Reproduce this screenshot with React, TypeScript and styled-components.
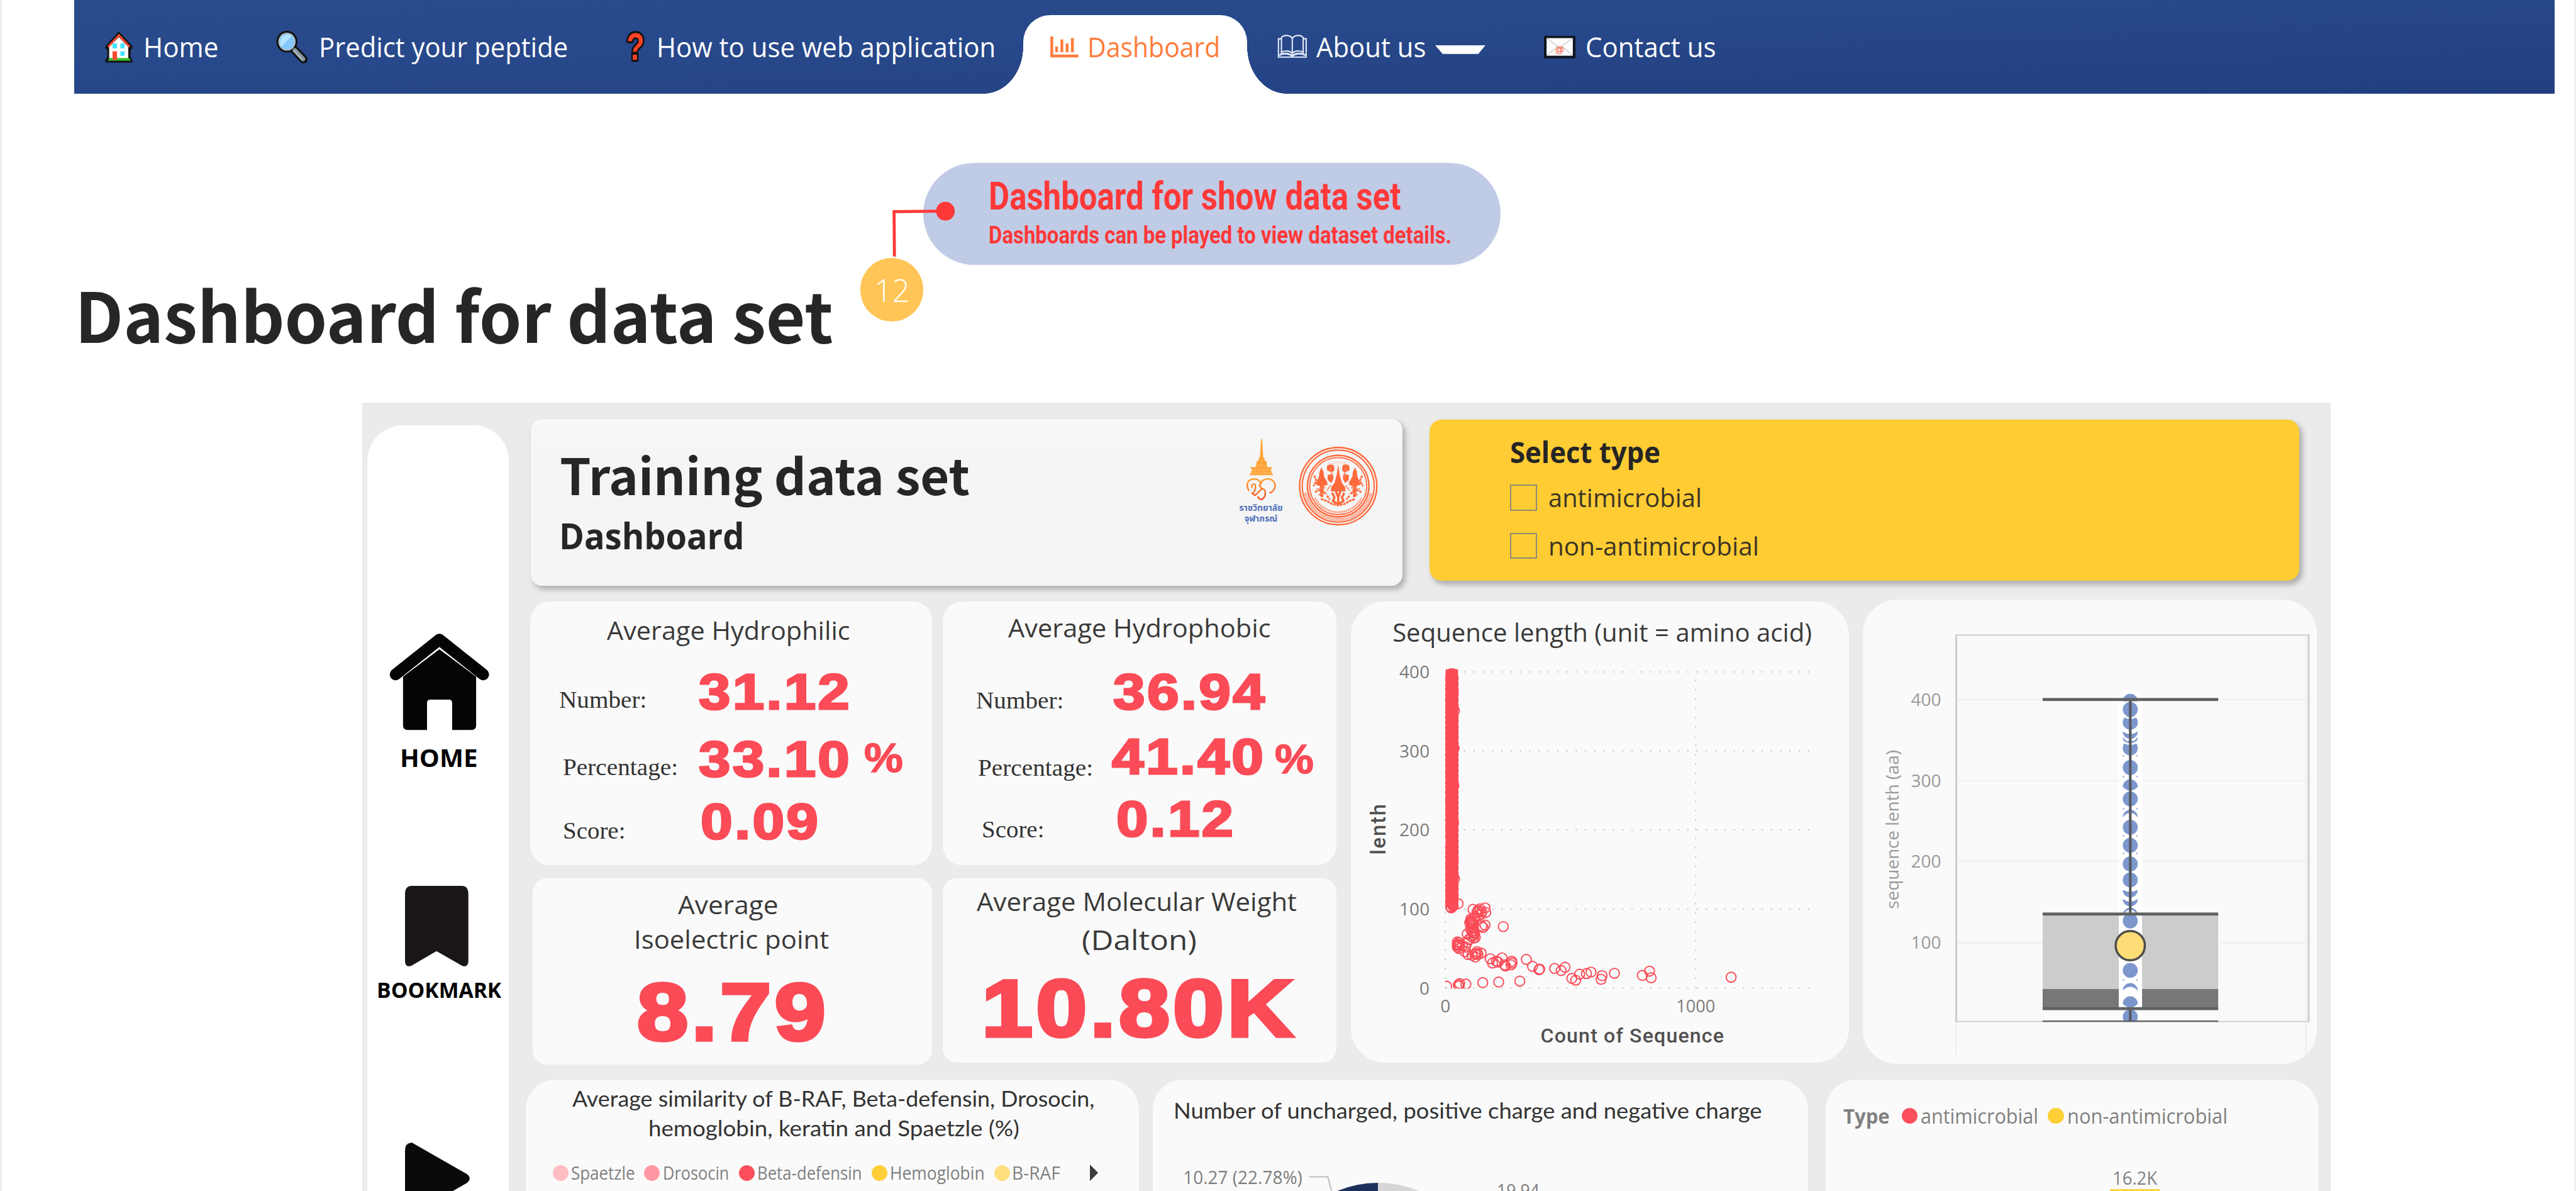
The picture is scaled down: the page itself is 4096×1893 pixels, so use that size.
import React, { useLayoutEffect, useRef, useState } from "react";
import styled, { createGlobalStyle, css } from "styled-components";

/* All sizes are given in design units (a 6873-unit wide board). */
const K = 4096 / 6873;
const u = (n: number) => `${(n * K).toFixed(2)}px`;

const SEGOE = `"Open Sans", "Noto Sans", sans-serif`;
const SOURCE = `"Noto Sans CJK SC", "Open Sans", sans-serif`;
const CALIBRI = `Lato, "Open Sans", sans-serif`;
const BLACK = `"Liberation Sans", Inter, sans-serif`;
const TIMES = `"Liberation Serif", serif`;
const ROBOTO = `Roboto, "Liberation Sans", sans-serif`;

const RED = "#fb4b57";
const YELLOW = "#ffcc33";
const CARD = "#fafafa";

const Global = createGlobalStyle`
  html, body { margin: 0; padding: 0; background: #fff; overflow: hidden; }
  * { box-sizing: border-box; }
`;

/* ---------- fitted text ---------- */

const FitBox = styled.span<{ $w: number }>`
  display: block;
  flex: none;
  width: ${(p) => u(p.$w)};
`;

const FitInner = styled.span<{ $size: number; $font: string; $weight: number; $color: string; $stroke: number }>`
  display: inline-block;
  vertical-align: top;
  white-space: nowrap;
  transform-origin: 0 50%;
  line-height: 1.2;
  font-family: ${(p) => p.$font};
  font-size: ${(p) => u(p.$size)};
  font-weight: ${(p) => p.$weight};
  color: ${(p) => p.$color};
  ${(p) =>
    p.$stroke > 0 &&
    css`
      -webkit-text-stroke: ${u(p.$stroke)} ${p.$color};
      letter-spacing: 0.035em;
    `}
`;

type FitProps = { w: number; size: number; font?: string; weight?: number; color?: string; stroke?: number; children: string };

function Fit({ w, size, font = SEGOE, weight = 400, color = "#333", stroke = 0, children }: FitProps) {
  const ref = useRef<HTMLSpanElement>(null);
  const [scale, setScale] = useState(1);
  useLayoutEffect(() => {
    if (ref.current) setScale((w * K) / ref.current.offsetWidth);
  }, [w, size, children]);
  return (
    <FitBox $w={w}>
      <FitInner ref={ref} $size={size} $font={font} $weight={weight} $color={color} $stroke={stroke} style={{ transform: `scaleX(${scale})` }}>
        {children}
      </FitInner>
    </FitBox>
  );
}

/* ---------- page ---------- */

const Page = styled.div`
  position: relative;
  width: 4096px;
  height: 1893px;
  overflow: hidden;
  background: #fff;
  box-shadow: inset ${u(5)} 0 0 #ececec, inset -${u(5)} 0 0 #f0f0f0;
`;

const NavBar = styled.nav`
  display: flex;
  align-items: flex-end;
  height: ${u(250)};
  margin-left: ${u(198)};
  width: ${u(6618)};
  background: linear-gradient(178deg, #2a4b8b 0%, #27488a 40%, #224080 100%);
`;

const NavItem = styled.a<{ $ml: number; $gap: number }>`
  display: flex;
  align-items: center;
  height: 100%;
  margin-left: ${(p) => u(p.$ml)};
  gap: ${(p) => u(p.$gap)};
`;

const ActiveTab = styled.a`
  position: relative;
  display: flex;
  align-items: center;
  gap: ${u(23)};
  height: ${u(210)};
  width: ${u(598)};
  margin-left: ${u(74)};
  padding: 0 0 ${u(40)} ${u(73)};
  background: #fff;
  border-radius: ${u(72)} ${u(72)} 0 0;
  &::before,
  &::after {
    content: "";
    position: absolute;
    bottom: 0;
    width: ${u(106)};
    height: ${u(126)};
  }
  &::before {
    right: calc(100% - 0.5px);
    background: radial-gradient(ellipse ${u(106)} ${u(126)} at 0 0, transparent 99.3%, #fff 100%);
  }
  &::after {
    left: calc(100% - 0.5px);
    background: radial-gradient(ellipse ${u(106)} ${u(126)} at 100% 0, transparent 99.3%, #fff 100%);
  }
`;

const Icon = styled.svg<{ $w: number; $h: number; $mt?: number }>`
  flex: none;
  display: block;
  width: ${(p) => u(p.$w)};
  height: ${(p) => u(p.$h)};
  margin-top: ${(p) => u(p.$mt ?? 0)};
  overflow: visible;
`;

/* ---------- callout (floats over the page) ---------- */

const Bubble = styled.aside`
  position: absolute;
  left: ${u(2464)};
  top: ${u(435)};
  width: ${u(1539)};
  height: ${u(271)};
  padding: ${u(30)} 0 0 ${u(173)};
  border-radius: ${u(136)};
  background: #c0cbe6;
`;

const Connector = styled.svg`
  position: absolute;
  left: ${u(2290)};
  top: ${u(530)};
  width: ${u(270)};
  height: ${u(160)};
`;

const StepBadge = styled.div`
  position: absolute;
  left: ${u(2295)};
  top: ${u(688)};
  width: ${u(169)};
  height: ${u(169)};
  display: flex;
  align-items: center;
  justify-content: center;
  border-radius: 50%;
  background: #ffc557;
`;

const PageTitle = styled.h1`
  margin: ${u(484)} 0 0 ${u(199)};
  height: ${u(200)};
  display: flex;
  align-items: center;
`;

/* ---------- dashboard ---------- */

const Board = styled.main`
  display: flex;
  align-items: flex-start;
  margin: ${u(140)} 0 0 ${u(966)};
  width: ${u(5252)};
  height: ${u(2103)};
  background: #ebebeb;
`;

const SideBar = styled.aside`
  flex: none;
  margin: ${u(60)} 0 0 ${u(13.5)};
  width: ${u(378)};
  height: ${u(2043)};
  padding-top: ${u(555)};
  border-radius: ${u(95)} ${u(95)} 0 0;
  background: #fff;
  overflow: hidden;
`;

const SideItem = styled.div<{ $x: number; $mt: number }>`
  margin: ${(p) => u(p.$mt)} 0 0 ${(p) => u(p.$x)};
`;

const Content = styled.section`
  flex: none;
  margin-left: ${u(45)};
  width: ${u(4800)};
`;

const Row = styled.div<{ $mt?: number; $ml?: number; $h?: number; $gap?: number }>`
  display: flex;
  align-items: flex-start;
  margin-top: ${(p) => u(p.$mt ?? 0)};
  padding-left: ${(p) => u(p.$ml ?? 0)};
  gap: ${(p) => u(p.$gap ?? 0)};
  ${(p) => p.$h && css`height: ${u(p.$h)};`}
`;

const Card = styled.article<{ $w: number; $h: number; $r: number; $mt?: number; $pt?: number; $ml?: number }>`
  flex: none;
  width: ${(p) => u(p.$w)};
  height: ${(p) => u(p.$h)};
  margin-top: ${(p) => u(p.$mt ?? 0)};
  margin-left: ${(p) => u(p.$ml ?? 0)};
  padding-top: ${(p) => u(p.$pt ?? 0)};
  border-radius: ${(p) => u(p.$r)};
  background: ${CARD};
`;

const SheetCard = styled(Card)`
  border-radius: ${(p) => `${u(p.$r)} ${u(p.$r)} 0 0`};
  overflow: hidden;
`;

const TitleCard = styled(Card)`
  display: flex;
  background: linear-gradient(180deg, #f8f8f8, #f5f5f5 22%, #f5f5f5);
  box-shadow: ${u(7)} ${u(10)} ${u(14)} rgba(0, 0, 0, 0.25);
`;

const TitleText = styled.div`
  flex: none;
  width: ${u(1865)};
  padding-left: ${u(76)};
`;

const SelectCard = styled(Card)`
  background: ${YELLOW};
  padding-left: ${u(216)};
  box-shadow: ${u(7)} ${u(10)} ${u(14)} rgba(0, 0, 0, 0.27);
`;

const Line = styled.div<{ $h: number; $x: number; $mt?: number }>`
  display: flex;
  align-items: center;
  height: ${(p) => u(p.$h)};
  margin-top: ${(p) => u(p.$mt ?? 0)};
  padding-left: ${(p) => u(p.$x)};
`;

const Check = styled.span`
  width: ${u(71)};
  height: ${u(70)};
  margin-right: ${u(31)};
  border: ${u(5)} solid #8f8b74;
`;

const Drop = styled.span<{ $dy: number; $ml?: number }>`
  margin-top: ${(p) => u(p.$dy * 2)};
  margin-left: ${(p) => u(p.$ml ?? 0)};
`;

const Dot = styled.i<{ $c: string; $ml: number; $mr: number }>`
  flex: none;
  width: ${u(42)};
  height: ${u(42)};
  border-radius: 50%;
  background: ${(p) => p.$c};
  margin: 0 ${(p) => u(p.$mr)} 0 ${(p) => u(p.$ml)};
`;

const Chart = styled.svg`
  display: block;
  width: 100%;
  height: 100%;
`;

/* ---------- nav icons ---------- */

const HouseIcon = () => (
  <Icon viewBox="0 0 74 83" $w={74} $h={83}>
    <path d="M37 4 L70 40 V44 L65 46 V72 L70 76 V80 H4 V76 L9 72 V46 L4 44 V40 Z" fill="#111" stroke="#111" strokeWidth="6" strokeLinejoin="round" />
    <path d="M37 15 L62 41 V72 H11 V41 Z" fill="#fdfdfd" />
    <path d="M8 41 L37 10 L66 41" fill="none" stroke="#ff4b2e" strokeWidth="5" />
    <path d="M7 78 L12 71 H64 L69 78 Z" fill="#35c22d" />
    <rect x="20" y="32" width="12" height="13" fill="#3fe3ff" />
    <rect x="41" y="32" width="11" height="13" fill="#3fe3ff" />
    <rect x="41" y="53" width="11" height="12" fill="#3fe3ff" />
    <rect x="20" y="53" width="12" height="23" fill="#ff4b2e" />
  </Icon>
);

const LensIcon = () => (
  <Icon viewBox="0 0 84 84" $w={84} $h={84}>
    <path d="M50 52 L73 76" stroke="#111" strokeWidth="22" strokeLinecap="round" />
    <ellipse cx="29" cy="29" rx="28" ry="29" fill="#111" />
    <path d="M50 52 L72 75" stroke="#84979d" strokeWidth="12" strokeLinecap="round" />
    <path d="M48 53 L69 76" stroke="#b6c3c6" strokeWidth="3" strokeLinecap="round" />
    <ellipse cx="29" cy="29" rx="23" ry="24" fill="#b5babd" />
    <ellipse cx="29" cy="29" rx="20" ry="21" fill="#84c8ff" />
    <path d="M14 43 A20 21 0 0 1 42 14 Z" fill="#b3e3ff" />
  </Icon>
);

const QuestionIcon = () => (
  <Icon viewBox="0 0 52 84" $w={52} $h={84}>
    <text x="26" y="77" textAnchor="middle" fontFamily="Liberation Sans, sans-serif" fontWeight="700" fontSize="102" textLength="48" lengthAdjust="spacingAndGlyphs" fill="#ff4326" stroke="#111" strokeWidth="11" strokeLinejoin="round" paintOrder="stroke">
      ?
    </text>
  </Icon>
);

const BarsIcon = () => (
  <Icon viewBox="0 0 75 56" $w={75} $h={56}>
    <path d="M4 0 V52 H75" fill="none" stroke="#ff7c3b" strokeWidth="7.5" />
    <path d="M17 42 V27 M31 42 V8 M45 42 V19 M59 42 V4" fill="none" stroke="#ff7c3b" strokeWidth="7.5" />
  </Icon>
);

const BookIcon = () => (
  <Icon viewBox="0 0 80 64" $w={80} $h={64}>
    <g fill="none" stroke="#dfe7f8" strokeWidth="3.6">
      <path d="M40 10 C34 0 16 0 11 8 V48 C18 42 34 42 40 50 C46 42 62 42 69 48 V8 C64 0 46 0 40 10 Z" />
      <path d="M40 10 V58" />
      <path d="M11 11 H3 V60 H77 V11 H69" />
      <path d="M5 55 C16 48 34 50 40 58 C46 50 64 48 75 55" strokeWidth="5" />
    </g>
  </Icon>
);

const CaretIcon = () => (
  <Icon viewBox="0 0 134 23" $w={134} $h={23} $mt={16}>
    <path d="M0 0 H134 L115 23 H20 Z" fill="#fff" />
  </Icon>
);

const MailIcon = () => (
  <Icon viewBox="0 0 84 60" $w={84} $h={60}>
    <rect x="0" y="0" width="84" height="60" rx="3" fill="#10151f" />
    <rect x="7" y="6" width="70" height="47" fill="#fdfdfd" />
    <path d="M8 7 L42 32 L76 7 M8 52 L36 28 M76 52 L48 28" fill="none" stroke="#cfcfcf" strokeWidth="2.5" />
    <text x="42" y="46" textAnchor="middle" fontFamily="Liberation Sans, sans-serif" fontWeight="700" fontSize="24" fill="#ff4b2e">
      @
    </text>
  </Icon>
);

function Navigation() {
  const label = (text: string, w: number) => (
    <Fit w={w} size={72} color="#fff">
      {text}
    </Fit>
  );
  return (
    <NavBar>
      <NavItem $ml={82} $gap={28}>
        <HouseIcon />
        {label("Home", 200)}
      </NavItem>
      <NavItem $ml={155} $gap={29}>
        <LensIcon />
        {label("Predict your peptide", 665)}
      </NavItem>
      <NavItem $ml={155} $gap={30}>
        <QuestionIcon />
        {label("How to use web application", 904)}
      </NavItem>
      <ActiveTab>
        <BarsIcon />
        <Fit w={354} size={72} color="#ff7c3b">
          Dashboard
        </Fit>
      </ActiveTab>
      <NavItem $ml={80} $gap={24}>
        <BookIcon />
        {label("About us", 293)}
        <CaretIcon />
      </NavItem>
      <NavItem $ml={157} $gap={26}>
        <MailIcon />
        {label("Contact us", 348)}
      </NavItem>
    </NavBar>
  );
}

function Callout() {
  return (
    <>
      <Bubble>
        <Line $h={120} $x={0}>
          <Fit w={1100} size={101} font={ROBOTO} weight={700} color="#ff3838">
            Dashboard for show data set
          </Fit>
        </Line>
        <Line $h={80} $x={0} $mt={4}>
          <Fit w={1235} size={64} font={ROBOTO} weight={700} color="#ff3838">
            Dashboards can be played to view dataset details.
          </Fit>
        </Line>
      </Bubble>
      <Connector viewBox="2290 530 270 160">
        <path d="M2386 684 L2385 564 L2510 563" fill="none" stroke="#ff3838" strokeWidth="8" />
        <circle cx="2522" cy="563" r="25" fill="#ff3838" />
      </Connector>
      <StepBadge>
        <Fit w={94} size={83} weight={300} color="#fff">
          12
        </Fit>
      </StepBadge>
    </>
  );
}

/* ---------- side bar ---------- */

function Side() {
  return (
    <SideBar>
      <SideItem $x={60.5} $mt={0}>
        <Icon viewBox="1040 1689 264 257" $w={264} $h={257}>
          <path d="M1055 1798 L1172 1705 L1289 1798" fill="none" stroke="#050505" strokeWidth="31" strokeLinecap="round" strokeLinejoin="round" />
          <path d="M1172 1731 L1270 1804 V1934 Q1270 1946 1258 1946 H1206 V1874 Q1206 1865 1197 1865 H1148 Q1139 1865 1139 1874 V1946 H1087 Q1075 1946 1075 1934 V1804 Z" fill="#050505" />
        </Icon>
      </SideItem>
      <SideItem $x={87} $mt={36}>
        <Fit w={208} size={66} font={SEGOE} weight={700} color="#000">
          HOME
        </Fit>
      </SideItem>
      <SideItem $x={101.5} $mt={302}>
        <Icon viewBox="0 0 169 216" $w={169} $h={216}>
          <path d="M18 0 H151 Q169 0 169 22 V202 Q167 219 152 213 L84 174 L17 213 Q2 219 0 202 V22 Q0 0 18 0 Z" fill="#1a1617" />
        </Icon>
      </SideItem>
      <SideItem $x={25} $mt={26}>
        <Fit w={332} size={58} font={SEGOE} weight={700} color="#000">
          BOOKMARK
        </Fit>
      </SideItem>
      <SideItem $x={101.5} $mt={372}>
        <Icon viewBox="0 0 174 192" $w={174} $h={192}>
          <path d="M18 0 L165 84 Q180 96 165 108 L18 192 Q0 190 0 172 V20 Q0 2 18 0 Z" fill="#0a0a0a" />
        </Icon>
      </SideItem>
    </SideBar>
  );
}

/* ---------- emblems ---------- */

const EmblemBox = styled.svg`
  flex: none;
  display: block;
  width: ${u(430)};
  height: ${u(270)};
  margin-top: ${u(33)};
`;

function Emblems() {
  const rays = Array.from({ length: 72 }, (_, i) => i * 5);
  return (
    <EmblemBox viewBox="0 0 430 270">
      <defs>
        <linearGradient id="royal" x1="0" y1="0" x2="0" y2="1">
          <stop offset="0" stopColor="#ffa436" />
          <stop offset="1" stopColor="#f4511e" />
        </linearGradient>
      </defs>
      <path d="M84 22 L87 22 L90 70 L93 72 L94 79 L99 82 L100 94 L104 97 L114 96 L110 103 L114 114 L118 118 H52 L56 114 L60 103 L55 96 L67 97 L71 94 L72 82 L77 79 L78 72 L81 70 Z" fill="#ffa53a" />
      <path d="M60 104 H110 M70 92 H101 M58 112 H113" stroke="#ffd39b" strokeWidth="1.6" strokeDasharray="4 3" />
      <path
        d="M51 158 C42 142 50 127 68 128 C76 129 82 134 84 142 M80 147 C84 127 105 122 117 134 C127 146 120 160 108 165 M60 150 C56 140 70 138 69 148 C70 158 64 166 61 166 L68 172 L84 157 L84 150 L80 147 M84 155 C98 150 98 172 90 180 C84 185 78 180 76 176"
        fill="none"
        stroke="url(#royal)"
        strokeWidth="4"
        strokeLinecap="round"
      />
      <g fontFamily='"Noto Sans Thai", "Noto Sans", sans-serif' fontWeight="700" fill="#4f70bb" textAnchor="middle">
        <text x="84" y="213" fontSize="24" textLength="116" lengthAdjust="spacingAndGlyphs">
          ราชวิทยาลัย
        </text>
        <text x="84" y="241" fontSize="24" textLength="88" lengthAdjust="spacingAndGlyphs">
          จุฬาภรณ์
        </text>
      </g>
      <g transform="translate(290 147)" fill="none" stroke="#ff6a3c">
        <circle r="103" strokeWidth="4" />
        <circle r="96" strokeWidth="3.5" />
        <circle r="82" strokeWidth="4" />
        <circle r="76" strokeWidth="3" />
        <path d="M-88 18 A90 90 0 0 0 88 18" strokeWidth="9" stroke="#ff9575" strokeDasharray="3 2" />
        <path d="M-62 32 A70 70 0 0 0 62 32" strokeWidth="5" stroke="#ff8e6c" strokeDasharray="4 2" />
        <g fill="#ff6a3c" stroke="none">
          <path d="M0 -58 L4 -30 L10 -8 L18 2 L20 14 H-20 L-18 2 L-10 -8 L-4 -30 Z" />
          <path d="M-45 -50 L-39 -38 L-38 -26 L-30 -12 L-28 -4 L-38 0 L-40 30 L-48 28 L-49 0 L-60 -4 L-56 -14 L-51 -26 L-50 -38 Z" />
          <path d="M45 -50 L39 -38 L38 -26 L30 -12 L28 -4 L38 0 L40 30 L48 28 L49 0 L60 -4 L56 -14 L51 -26 L50 -38 Z" />
          <path d="M-30 -54 L-22 -58 L-12 -56 L-10 -44 L-16 -36 L-30 -42 Z M30 -54 L22 -58 L12 -56 L10 -44 L16 -36 L30 -42 Z" />
          <path d="M-28 -30 L-14 -32 L-12 -22 L-18 -8 L-28 -16 Z M28 -30 L14 -32 L12 -22 L18 -8 L28 -16 Z" />
        </g>
        <path d="M-16 18 L-10 30 L-14 40 L0 48 L14 40 L10 30 L16 18 M-6 14 L0 30 L6 14 M0 30 V48" strokeWidth="6" />
        <path d="M-64 -28 L-58 -14 L-66 0 M64 -28 L58 -14 L66 0 M-62 16 L-48 10 L-30 22 M62 16 L48 10 L30 22 M-46 34 L-30 40 L-16 48 L0 51 L16 48 L30 40 L46 34 M-30 26 L-22 36 M30 26 L22 36" strokeWidth="5" strokeDasharray="7 2" />
        <path d="M-22 -48 L-14 -20 M22 -48 L14 -20 M-58 8 L-34 4 M58 8 L34 4 M-52 24 L-34 14 M52 24 L34 14 M-20 -2 L-30 12 M20 -2 L30 12" strokeWidth="4" stroke="#ff8761" strokeDasharray="5 2" />
        {rays.filter((a) => a > 240 && a < 300).map((a) => (
          <path key={a} d="M60 0 H66" transform={`rotate(${a})`} strokeWidth="1.5" stroke="#ffb59f" />
        ))}
      </g>
    </EmblemBox>
  );
}

/* ---------- metric cards ---------- */

type Metric = { label: string; lx: number; lw: number; dy: number; value: string; vx: number; vw: number; mt: number; pct?: [number, number] };

function MetricRow({ label, lx, lw, dy, value, vx, vw, mt, pct }: Metric) {
  return (
    <Line $h={100} $x={lx} $mt={mt}>
      <Drop $dy={dy}>
        <Fit w={lw} size={63} font={TIMES}>
          {label}
        </Fit>
      </Drop>
      <Drop $dy={0} $ml={vx - lx - lw}>
        <Fit w={vw} size={134} font={BLACK} weight={700} color={RED} stroke={5}>
          {value}
        </Fit>
      </Drop>
      {pct && (
        <Drop $dy={pct[1]} $ml={pct[0]}>
          <Fit w={107} size={108} font={BLACK} weight={700} color={RED} stroke={2.5}>
            %
          </Fit>
        </Drop>
      )}
    </Line>
  );
}

function Head({ x, w, mt, size = 66, children }: { x: number; w: number; mt?: number; size?: number; children: string }) {
  return (
    <Line $h={80} $x={x} $mt={mt}>
      <Fit w={w} size={size} color="#3a3a3a">
        {children}
      </Fit>
    </Line>
  );
}

function Metrics() {
  return (
    <div>
      <Row $gap={29.5}>
        <Card $w={1072} $h={702} $r={52} $pt={37}>
          <Head x={205} w={648}>Average Hydrophilic</Head>
          <MetricRow label="Number:" lx={78} lw={233} dy={22} value="31.12" vx={449} vw={408} mt={73} />
          <MetricRow label="Percentage:" lx={87} lw={307} dy={21} value="33.10" vx={449} vw={408} mt={81} pct={[34, -3]} />
          <MetricRow label="Score:" lx={88} lw={167} dy={25} value="0.09" vx={454} vw={320} mt={65} />
        </Card>
        <Card $w={1049} $h={702} $r={52} $pt={31}>
          <Head x={174} w={700}>Average Hydrophobic</Head>
          <MetricRow label="Number:" lx={89} lw={233} dy={22} value="36.94" vx={454} vw={410} mt={80} />
          <MetricRow label="Percentage:" lx={94} lw={307} dy={30} value="41.40" vx={451} vw={410} mt={72} pct={[24, 9]} />
          <MetricRow label="Score:" lx={103} lw={167} dy={27} value="0.12" vx={462} vw={318} mt={67} />
        </Card>
      </Row>
      <Row $gap={29.5} $mt={36} $ml={6}>
        <Card $w={1066} $h={497} $r={38} $pt={31}>
          <Head x={389} w={268}>Average</Head>
          <Head x={271} w={520} mt={12}>Isoelectric point</Head>
          <Line $h={160} $x={280} $mt={74}>
            <Fit w={511} size={215} font={BLACK} weight={700} color={RED} stroke={9}>
              8.79
            </Fit>
          </Line>
        </Card>
        <Card $w={1049} $h={491.5} $r={38} $pt={23}>
          <Head x={90} w={854}>Average Molecular Weight</Head>
          <Head x={371} w={307} mt={20} size={74}>(Dalton)</Head>
          <Line $h={160} $x={103} $mt={63}>
            <Fit w={840} size={215} font={BLACK} weight={700} color={RED} stroke={9}>
              10.80K
            </Fit>
          </Line>
        </Card>
      </Row>
    </div>
  );
}

/* ---------- scatter chart ---------- */

const sx = (x: number) => 3590 + x * 0.8673;
const sy = (y: number) => 1590 + y * 0.8036;

const cloud: [number, number][] = [
  [393, 1040], [415, 1038], [430, 1035], [405, 1050], [420, 1048], [432, 1050], [410, 1060], [400, 1065], [395, 1070], [385, 1078],
  [390, 1080], [383, 1085], [395, 1090], [388, 1095], [420, 1095], [424, 1100], [430, 1092], [385, 1105], [395, 1110], [390, 1115],
  [398, 1120], [375, 1122], [388, 1130], [395, 1135], [400, 1133], [380, 1140], [345, 1148], [350, 1150], [345, 1155], [352, 1160],
  [345, 1165], [360, 1160], [350, 1170], [370, 1165], [375, 1150], [368, 1180], [378, 1190], [405, 1180], [400, 1188], [408, 1190],
  [418, 1185], [400, 1198], [390, 1192], [446, 1204], [482, 1201], [453, 1218], [465, 1212], [470, 1215], [490, 1224], [493, 1228],
  [512, 1212], [513, 1218], [510, 1224], [486, 1097], [557, 1206], [576, 1229], [596, 1240], [598, 1238], [644, 1236], [664, 1243],
  [676, 1232], [697, 1269], [709, 1275], [721, 1255], [742, 1253], [756, 1248], [790, 1260], [787, 1272], [828, 1252], [914, 1259],
  [936, 1245], [941, 1267], [1187, 1265], [537, 1278], [472, 1281], [423, 1283], [371, 1288], [352, 1286], [348, 1290], [312, 1295],
  [350, 1294], [347, 1021], [386, 1072], [392, 1102], [408, 1043], [418, 1056], [345, 1160], [392, 1085], [388, 1088], [396, 1126],
  [387, 1082], [394, 1118], [412, 1047], [347, 1158], [404, 1186],
];

const column: [number, number][] = Array.from({ length: 390 }, (_, i) => [
  324 + ((i * 37) % 9) + ((i * 53) % 31 === 0 ? 4 : 0),
  257 + i * 2,
]);

function Scatter() {
  const ticks: [string, number][] = [["400", 252], ["300", 514], ["200", 776], ["100", 1039], ["0", 1301]];
  return (
    <Chart viewBox="3605 1604.5 1329 1229.5">
      <defs>
        <clipPath id="plot">
          <rect x={sx(307)} y={sy(240)} width="1100" height={sy(1303) - sy(240)} />
        </clipPath>
      </defs>
      <text x="3716" y="1712" fontFamily={SEGOE} fontSize="67" fill="#3a3a3a" textLength="1119" lengthAdjust="spacingAndGlyphs">
        Sequence length (unit = amino acid)
      </text>
      <g stroke="#d0d0d0" strokeWidth="4" strokeDasharray="4 20.8">
        {ticks.map(([t, y]) => (
          <path key={t} d={`M${sx(308)} ${sy(y)}H${sx(1452)}`} />
        ))}
        <path d={`M${sx(308)} ${sy(1301)}V${sy(252)}M${sx(1078)} ${sy(1301)}V${sy(252)}`} />
      </g>
      <g fontFamily={SEGOE} fontSize="47" fill="#7a7a7a" textAnchor="end">
        {ticks.map(([t, y]) => (
          <text key={t} x="3815" y={sy(y) + 17}>
            {t}
          </text>
        ))}
      </g>
      <g fontFamily={SEGOE} fontSize="47" fill="#7a7a7a" textAnchor="middle">
        <text x="3857" y="2700">0</text>
        <text x="4525" y="2700" textLength="104" lengthAdjust="spacingAndGlyphs">1000</text>
      </g>
      <g fontFamily={ROBOTO} fontWeight="500" fill="#505050">
        <text x="4111" y="2780" fontSize="54" textLength="489" lengthAdjust="spacing">
          Count of Sequence
        </text>
        <text transform="translate(3697 2280) rotate(-90)" fontSize="55" textLength="135" lengthAdjust="spacing">
          lenth
        </text>
      </g>
      <g clipPath="url(#plot)" fill="none" stroke={RED} strokeWidth="3.2">
        {[...column, ...cloud].map(([x, y], i) => (
          <circle key={i} cx={sx(x)} cy={sy(y)} r="13.2" />
        ))}
        <path d={`M${sx(328)} ${sy(243)}V${sy(1030)}`} strokeWidth="33" />
      </g>
    </Chart>
  );
}

/* ---------- box plot ---------- */

const bx = (x: number) => 4950 + x * 0.8291;
const by = (y: number) => 1590 + y * 0.8036;

const fullBeads = [377, 420, 505, 570, 674, 768, 828, 890, 943, 1079, 1243, 1397];
/* [centre, depth of the inner curve]: what shows of beads hidden by later ones */
const lowCrescents: [number, number][] = [[450, 14], [468, 28], [976, 10], [1006, 14]];
const highCrescents: [number, number][] = [[350, 0], [634, -20], [735, 24], [1060, 30], [1310, 20], [1354, -20]];

function BoxPlot() {
  const ticks: [string, number][] = [["400", 344], ["300", 613], ["200", 881], ["100", 1151]];
  const cx = bx(886);
  const r = 20;
  const left = bx(604);
  const width = bx(1169) - left;
  const fill = "#7d97cd";
  const bar = (y: number, h: number) => <rect x={left} y={by(y) - h / 2} width={width} height={h} fill="#5f6261" />;
  return (
    <Chart viewBox="4971 1600 1211 1238">
      <defs>
        <clipPath id="box-area">
          <rect x="5220" y="1600" width="941" height={by(1414) - 1600} />
        </clipPath>
      </defs>
      <g stroke="#f0f0f0" strokeWidth="4">
        {ticks.map(([t, y]) => (
          <path key={t} d={`M5222 ${by(y)}H6158`} />
        ))}
        <path d={`M${bx(326)} ${by(1413)}V${by(1525)}M${bx(1451)} ${by(130)}V${by(1525)}`} />
      </g>
      <path d={`M${bx(326)} ${by(130)}H${bx(1461)}M${bx(326)} ${by(1413)}H${bx(1461)}`} stroke="#c9c9c9" strokeWidth="3" fill="none" />
      <path d={`M${bx(326)} ${by(129)}V${by(1414)}M${bx(1460)} ${by(129)}V${by(1414)}`} stroke="#cdcdcd" strokeWidth="5" />
      <g fontFamily={SEGOE} fontSize="47" fill="#999" textAnchor="end">
        {ticks.map(([t, y]) => (
          <text key={t} x="5180" y={by(y) + 17}>
            {t}
          </text>
        ))}
      </g>
      <text transform="translate(5067 2425) rotate(-90)" fontFamily={SEGOE} fontSize="47" fill="#999" textLength="424" lengthAdjust="spacing">
        sequence lenth (aa)
      </text>
      <rect x={left} y={by(1055)} width={width} height={by(1305) - by(1055)} fill="#cbcccb" />
      <rect x={left} y={by(1305)} width={width} height={by(1370) - by(1305)} fill="#767776" />
      <rect x={bx(849)} y={by(312)} width={bx(924) - bx(849)} height={by(1413) - by(312)} rx="24" fill="#fff" />
      <g clipPath="url(#box-area)">
        {lowCrescents.map(([y, d]) => (
          <path key={y} d={`M${cx - r} ${by(y)}A${r} ${r} 0 0 0 ${cx + r} ${by(y)}Q${cx} ${by(y) + d} ${cx - r} ${by(y)}Z`} fill={fill} />
        ))}
        {highCrescents.map(([y, d]) => (
          <path key={y} d={`M${cx - r} ${by(y)}A${r} ${r} 0 0 1 ${cx + r} ${by(y)}Q${cx} ${by(y) - d} ${cx - r} ${by(y)}Z`} fill={fill} />
        ))}
        {fullBeads.map((y) => (
          <circle key={y} cx={cx} cy={by(y)} r={r} fill={fill} />
        ))}
        <path d={`M${cx - 24} ${by(392)}Q${cx} ${by(420)} ${cx + 24} ${by(392)}`} fill="none" stroke="#fff" strokeWidth="5" />
        <path d={`M${cx - 24} ${by(480)}Q${cx} ${by(504)} ${cx + 24} ${by(480)}`} fill="none" stroke="#fff" strokeWidth="5" />
        {[531, 600, 707, 797, 855, 1275].map((y) => (
          <path key={y} d={`M${cx - 20} ${by(y)}h4m32 0h4`} stroke={fill} strokeWidth="3" />
        ))}
        <path d={`M${cx} ${by(344)}V${by(1055)}M${cx} ${by(1370)}V${by(1413)}`} stroke="#55585c" strokeWidth="7" />
        {bar(344, 8)}
        {bar(1056, 8)}
        {bar(1370, 8)}
        {bar(1413, 6)}
      </g>
      <circle cx={cx} cy={by(1161)} r="39" fill="#ffdd76" stroke="#4d4f4e" strokeWidth="6" />
    </Chart>
  );
}

/* ---------- bottom cards ---------- */

const ArrowIcon = () => (
  <Icon viewBox="0 0 22 44" $w={22} $h={44}>
    <path d="M0 0 L22 22 L0 44 Z" fill="#3d3d3d" stroke="#fff" strokeWidth="8" paintOrder="stroke" />
  </Icon>
);

function Legend({ w, size = 50, weight, children }: { w: number; size?: number; weight?: number; children: string }) {
  return (
    <Fit w={w} size={size} weight={weight} color="#808080">
      {children}
    </Fit>
  );
}

const PieBox = styled.svg`
  display: block;
  width: 100%;
  height: ${u(85)};
  margin-top: ${u(95)};
`;

const BarTop = styled.div`
  width: ${u(132)};
  height: ${u(8)};
  margin: 0 0 0 ${u(758)};
  background: #fdd23c;
`;

function BottomCards() {
  return (
    <Row $mt={39} $gap={37}>
      <SheetCard $w={1636} $h={298} $r={80} $pt={17}>
        <Line $h={70} $x={125}>
          <Fit w={1394} size={57} font={CALIBRI}>Average similarity of B-RAF, Beta-defensin, Drosocin,</Fit>
        </Line>
        <Line $h={70} $x={327} $mt={8}>
          <Fit w={990} size={57} font={CALIBRI}>hemoglobin, keratin and Spaetzle (%)</Fit>
        </Line>
        <Line $h={60} $x={0} $mt={54}>
          <Dot $c="#ffbcc2" $ml={72} $mr={7} />
          <Legend w={171}>Spaetzle</Legend>
          <Dot $c="#ff98a2" $ml={24} $mr={9} />
          <Legend w={177}>Drosocin</Legend>
          <Dot $c="#fb4f5c" $ml={25} $mr={7} />
          <Legend w={280}>Beta-defensin</Legend>
          <Dot $c="#ffcf38" $ml={25} $mr={7} />
          <Legend w={253}>Hemoglobin</Legend>
          <Dot $c="#ffdf80" $ml={25} $mr={6} />
          <Legend w={128}>B-RAF</Legend>
          <Drop $dy={0} $ml={79}>
            <ArrowIcon />
          </Drop>
        </Line>
      </SheetCard>
      <SheetCard $w={1749} $h={298} $r={80} $pt={49}>
        <Line $h={70} $x={56}>
          <Fit w={1570} size={57} font={CALIBRI}>Number of uncharged, positive charge and negative charge</Fit>
        </Line>
        <PieBox viewBox="3075 3093 1749 85">
          <g fontFamily={SEGOE} fontSize="49" fill="#7d7d7d">
            <text x="3156" y="3159" textLength="318" lengthAdjust="spacingAndGlyphs">10.27 (22.78%)</text>
            <text x="3993" y="3194" textLength="114" lengthAdjust="spacingAndGlyphs">19.94</text>
          </g>
          <path d="M3491 3139 H3542 L3552 3176" fill="none" stroke="#c4c4c4" strokeWidth="4" />
          <path d="M3676 3155 A285 285 0 0 0 3391 3440 H3676 Z" fill="#1c305b" />
          <path d="M3676 3155 A285 285 0 0 1 3961 3440 H3676 Z" fill="#d6d6d6" />
        </PieBox>
      </SheetCard>
      <SheetCard $w={1313} $h={298} $r={80} $pt={62} $ml={10}>
        <Line $h={70} $x={47}>
          <Legend w={124} size={55} weight={700}>Type</Legend>
          <Dot $c="#fb4f5c" $ml={32} $mr={9} />
          <Legend w={313} size={55}>antimicrobial</Legend>
          <Dot $c="#ffcf38" $ml={26} $mr={9} />
          <Legend w={428} size={55}>non-antimicrobial</Legend>
        </Line>
        <Line $h={60} $x={765} $mt={100}>
          <Legend w={119}>16.2K</Legend>
        </Line>
        <BarTop />
      </SheetCard>
    </Row>
  );
}

export default function App() {
  return (
    <Page>
      <Global />
      <Navigation />
      <Callout />
      <PageTitle>
        <Fit w={2024} size={183} font={SOURCE} weight={700} color="#262626">
          Dashboard for data set
        </Fit>
      </PageTitle>
      <Board>
        <Side />
        <Content>
          <Row $mt={43} $ml={13} $gap={72}>
            <TitleCard $w={2326} $h={445} $r={30}>
              <TitleText>
                <Line $h={160} $x={2} $mt={65}>
                  <Fit w={1094} size={133} font={SOURCE} weight={700} color="#262626">
                    Training data set
                  </Fit>
                </Line>
                <Line $h={100} $x={0} $mt={38}>
                  <Fit w={494} size={95} weight={700} color="#262626">
                    Dashboard
                  </Fit>
                </Line>
              </TitleText>
              <Emblems />
            </TitleCard>
            <SelectCard $w={2321} $h={429} $r={32} $mt={3} $pt={45}>
              <Line $h={80} $x={0}>
                <Fit w={401} size={77} weight={700} color="#252525">
                  Select type
                </Fit>
              </Line>
              <Line $h={80} $x={0} $mt={42}>
                <Check />
                <Fit w={409} size={67} color="#3b3424">
                  antimicrobial
                </Fit>
              </Line>
              <Line $h={80} $x={0} $mt={49}>
                <Check />
                <Fit w={562} size={67} color="#3b3424">
                  non-antimicrobial
                </Fit>
              </Line>
            </SelectCard>
          </Row>
          <Row $mt={38} $ml={12} $h={1240}>
            <Row $mt={5}>
              <Metrics />
            </Row>
            <Row $ml={40}>
              <Card $w={1329} $h={1229.5} $r={92} $mt={4.5}>
                <Scatter />
              </Card>
            </Row>
            <Row $ml={37}>
              <Card $w={1211} $h={1238} $r={92}>
                <BoxPlot />
              </Card>
            </Row>
          </Row>
          <BottomCards />
        </Content>
      </Board>
    </Page>
  );
}
